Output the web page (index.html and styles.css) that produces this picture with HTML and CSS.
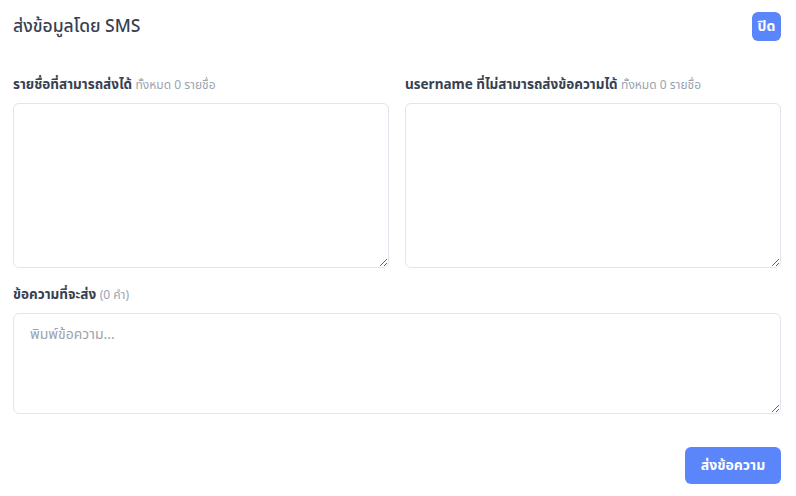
FILE: index.html
```html
<!DOCTYPE html>
<html lang="th">
<head>
<meta charset="utf-8">
<link rel="stylesheet" href="styles.css">
</head>
<body>
<div class="modal">
  <div class="header">
    <h2 class="title">ส่งข้อมูลโดย SMS</h2>
    <button class="btn btn-close">ปิด</button>
  </div>
  <div class="grid">
    <div class="field">
      <label class="label">รายชื่อที่สามารถส่งได้ <span class="hint">ทั้งหมด 0 รายชื่อ</span></label>
      <textarea class="box box-tall"></textarea>
    </div>
    <div class="field">
      <label class="label">username ที่ไม่สามารถส่งข้อความได้ <span class="hint">ทั้งหมด 0 รายชื่อ</span></label>
      <textarea class="box box-tall"></textarea>
    </div>
  </div>
  <div class="field field-msg">
    <label class="label">ข้อความที่จะส่ง <span class="hint">(0 คำ)</span></label>
    <textarea class="box box-msg" placeholder="พิมพ์ข้อความ..."></textarea>
  </div>
  <div class="footer">
    <button class="btn btn-send">ส่งข้อความ</button>
  </div>
</div>
</body>
</html>
```
FILE: styles.css
```css
* { box-sizing: border-box; }
html, body { margin: 0; padding: 0; background: #fff; }
body {
  font-family: "Noto Sans", "Noto Sans Thai", sans-serif;
  color: #374151;
}
.modal {
  padding: 12px 15px 12px 13px;
}
.header {
  display: flex;
  justify-content: space-between;
  align-items: center;
  height: 29px;
}
.title {
  margin: 0;
  font-size: 17.5px;
  font-weight: 500;
  color: #374151;
}
.btn {
  border: none;
  color: #fff;
  background: #5b86fb;
  font-family: inherit;
  font-weight: 700;
  border-radius: 6px;
  cursor: pointer;
}
.btn-close {
  width: 29px;
  height: 29px;
  font-size: 14px;
  padding: 0;
}
.grid {
  display: grid;
  grid-template-columns: 1fr 1fr;
  gap: 16px;
  margin-top: 33px;
}
.field {
  display: flex;
  flex-direction: column;
}
.label {
  font-size: 13.5px;
  font-weight: 700;
  color: #374151;
  height: 20px;
  line-height: 20px;
  margin-bottom: 9px;
}
.hint {
  font-weight: 400;
  font-size: 12px;
  color: #9ca3af;
}
.box {
  width: 100%;
  border: 1px solid #e0e5ef;
  border-radius: 6px;
  font-family: inherit;
  font-size: 14px;
  padding: 10px 16px;
  color: #374151;
  resize: vertical;
  outline: none;
}
.box-tall { height: 165px; }
.field-msg { margin-top: 16px; }
.box-msg { height: 101px; }
.box::placeholder { color: #9ca3af; }
.footer {
  display: flex;
  justify-content: flex-end;
  margin-top: 33px;
}
.btn-send {
  width: 96px;
  height: 37px;
  font-size: 14px;
}
```
